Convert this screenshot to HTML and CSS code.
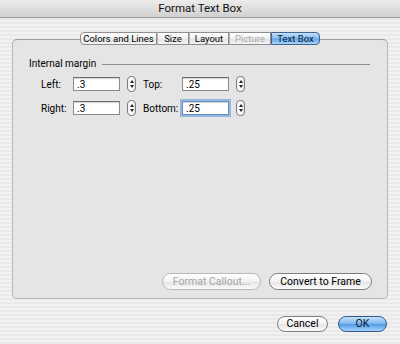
FILE: index.html
```html
<!DOCTYPE html>
<html lang="en">
<head>
    <meta charset="UTF-8">
    <title>Format Text Box</title>
    <link rel="stylesheet" href="styles.css">
</head>
<body>
    <div class="window">
        <div class="titlebar">Format Text Box</div>
        <div class="dialog">
            <!-- tab strip sits across the top border of the panel -->
            <div class="tabs">
                <span class="tab t-colors">Colors and Lines</span>
                <span class="tab t-size">Size</span>
                <span class="tab t-layout">Layout</span>
                <span class="tab t-picture disabled">Picture</span>
                <span class="tab t-textbox selected">Text Box</span>
            </div>
            <div class="panel">
                <div class="group-title"><span>Internal margin</span></div>
                <div class="fields">
                    <label>Left:</label>
                    <input type="text" value=".3">
                    <span class="stepper"><i class="up"></i><i class="down"></i></span>
                    <label>Top:</label>
                    <input type="text" value=".25">
                    <span class="stepper"><i class="up"></i><i class="down"></i></span>

                    <label>Right:</label>
                    <input type="text" value=".3">
                    <span class="stepper"><i class="up"></i><i class="down"></i></span>
                    <label>Bottom:</label>
                    <input type="text" value=".25" class="focused">
                    <span class="stepper"><i class="up"></i><i class="down"></i></span>
                </div>
                <div class="panel-buttons">
                    <button class="btn callout" disabled>Format Callout...</button>
                    <button class="btn convert">Convert to Frame</button>
                </div>
            </div>
            <div class="footer">
                <button class="btn cancel">Cancel</button>
                <button class="btn default">OK</button>
            </div>
        </div>
    </div>
</body>
</html>
```

FILE: styles.css
```css
/* Aqua style dialog */
body {
    margin: 0;
    font-family: Roboto, "Liberation Sans", sans-serif;
    font-size: 10px;
    color: #000;
}
.window {
    width: 400px;
    height: 344px;
    background: repeating-linear-gradient(#f1f1f1 0 2px, #e9e9e9 2px 4px);
    overflow: hidden;
}
.titlebar {
    height: 17px;
    line-height: 17px;
    text-align: center;
    font-size: 11.5px;
    color: #111;
    background: linear-gradient(#ececec, #d0d0d0);
    border-bottom: 1px solid #9c9c9c;
}
.dialog {
    padding: 14px 12px 0 12px;
}
.tabs {
    display: flex;
    justify-content: center;
    height: 13px;
    position: relative;
    z-index: 1;
}
.tab {
    box-sizing: border-box;
    height: 13px;
    line-height: 11px;
    text-align: center;
    white-space: nowrap;
    background: linear-gradient(#ffffff, #f0f0f0 50%, #e2e2e2 51%, #f4f4f4);
    border: 1px solid #8e8e8e;
    border-left: 1px solid #b4b4b4;
    font-size: 9.5px;
}
.t-colors {
    border-left: 1px solid #8e8e8e;
    border-radius: 4px 0 0 4px;
    width: 77px;
}
.t-size { width: 32px; }
.t-layout { width: 40px; }
.t-picture { width: 42px; }
.t-textbox {
    border-radius: 0 4px 4px 0;
    width: 49px;
}
.tab.disabled {
    color: #a8a8a8;
}
.tab.selected {
    background: linear-gradient(#c6e2fb, #7fb8ef 50%, #5ba3ea 51%, #a8d6fb);
    border-color: #44648c;
    color: #0d1b30;
}
.panel {
    margin-top: -6px;
    height: 260px;
    box-sizing: border-box;
    border: 1px solid #b7b7b7;
    border-top-color: #9a9a9a;
    border-radius: 5px;
    background: #e5e5e5;
    padding: 17px 15px 8px 16px;
    display: flex;
    flex-direction: column;
}
.group-title {
    display: flex;
    align-items: center;
    gap: 6px;
    height: 12px;
    margin-right: 2px;
}
.group-title::after {
    content: "";
    flex: 1;
    border-top: 1px solid #8c8c8c;
    margin-top: 3px;
}
.fields {
    display: grid;
    grid-template-columns: 32px 47px 23px 39px 47px 14px;
    grid-auto-rows: 14px;
    row-gap: 10px;
    align-items: center;
    margin: 8px 0 0 12px;
}
.fields label {
    white-space: nowrap;
}
.fields input {
    width: 47px;
    height: 14px;
    box-sizing: border-box;
    border: 1px solid #8b8b8b;
    border-top-color: #6d6d6d;
    box-shadow: inset 0 1px 1px rgba(0,0,0,0.18);
    background: #fff;
    padding: 0 3px;
    font-family: inherit;
    font-size: 10px;
    outline: none;
}
.fields input.focused {
    border-color: #6a8dbd;
    box-shadow: 0 0 0 2px #92b8e4, inset 0 1px 1px rgba(0,0,0,0.18);
}
.stepper {
    justify-self: start;
    margin-left: 7px;
    width: 7px;
    height: 14px;
    border: 1px solid #7d7d7d;
    border-radius: 4px;
    background: linear-gradient(90deg, #f2f2f2, #ffffff 50%, #e4e4e4);
    display: flex;
    flex-direction: column;
    align-items: center;
    justify-content: center;
    gap: 2px;
}
.stepper i {
    width: 0;
    height: 0;
    border-left: 2px solid transparent;
    border-right: 2px solid transparent;
}
.stepper .up { border-bottom: 3px solid #222; }
.stepper .down { border-top: 3px solid #222; }
.panel-buttons {
    margin-top: auto;
    display: flex;
    justify-content: flex-end;
    gap: 8px;
}
.btn {
    box-sizing: border-box;
    height: 17px;
    border: 1px solid #7e7e7e;
    border-radius: 9px;
    background: linear-gradient(#ffffff, #f2f2f2 50%, #e3e3e3 51%, #fbfbfb);
    font-family: inherit;
    font-size: 10.5px;
    color: #000;
    padding: 0;
    white-space: nowrap;
    line-height: 15px;
}
.btn[disabled] {
    color: #a6a6a6;
    border-color: #b8b8b8;
}
.callout { width: 99px; }
.convert { width: 103px; }
.footer {
    display: flex;
    justify-content: flex-end;
    gap: 10px;
    margin-top: 17px;
    padding-right: 1px;
}
.footer .btn {
    height: 16px;
    line-height: 14px;
}
.cancel { width: 51px; }
.btn.default {
    width: 49px;
    border-color: #335a8d;
    background: linear-gradient(#c4e0fa, #7ab4ee 50%, #4f99e6 51%, #a6d4fb);
    color: #0d1b30;
}
```
